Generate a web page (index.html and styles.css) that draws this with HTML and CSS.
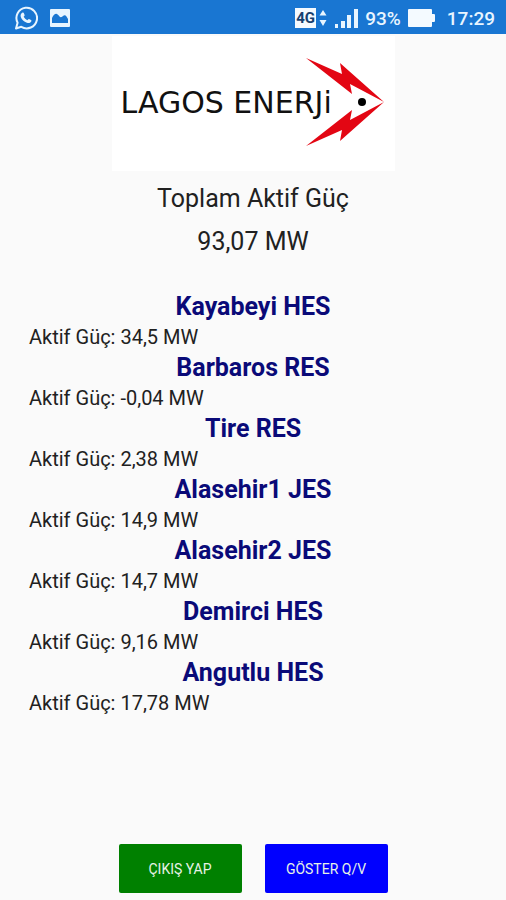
FILE: index.html
```html
<!DOCTYPE html>
<html lang="tr">
<head>
    <meta charset="UTF-8">
    <meta name="viewport" content="width=device-width, initial-scale=1.0">
    <title>Lagos Enerji</title>
    <link rel="stylesheet" href="styles.css">
</head>
<body>
    <header class="status-bar">
        <div class="status-group">
            <svg class="whatsapp" width="24" height="24" viewBox="0 0 24 24" aria-hidden="true">
                <path d="M2 22.5 L3.6 16.8 A10.3 10.3 0 1 1 7.3 20.8 Z" fill="none" stroke="#e8f5ff" stroke-width="2" stroke-linejoin="round"/>
                <path d="M8.6 6.6 C9.2 6.3 9.6 6.6 9.9 7.3 L10.6 9 C10.8 9.6 10 10.2 9.7 10.7 C10.5 12.3 11.7 13.4 13.4 14.2 C14 13.8 14.4 12.9 15 13.1 L17 14 C17.6 14.3 17.5 15 17.1 15.7 C16.3 17 14.6 17.4 12.9 16.8 C9.9 15.8 7.8 13.7 6.8 11 C6.2 9.3 7 7.3 8.6 6.6 Z" fill="#e8f5ff"/>
            </svg>
            <svg class="picture" width="20" height="18" viewBox="0 0 20 18" aria-hidden="true">
                <rect width="20" height="18" rx="1" fill="#e8f5ff"/>
                <path d="M2 14 V9 Q4.5 4 7 5 Q8.5 6 10 8 Q12 8.5 13 7 Q15 5.5 16.5 7.5 L18 10 V14 Z" fill="#1976d2"/>
            </svg>
        </div>
        <div class="status-group status-right">
            <span class="network">4G</span>
            <svg class="arrows" width="8" height="18" viewBox="0 0 8 18" aria-hidden="true">
                <path d="M4 1 L7.5 6.5 H0.5 Z M4 17 L7.5 11 H0.5 Z" fill="#e8f5ff"/>
            </svg>
            <svg class="signal" width="24" height="20" viewBox="0 0 24 20" aria-hidden="true">
                <path d="M1 16 H4 V20 H1 Z M7 13 H11 V20 H7 Z M13 7 H17 V20 H13 Z M20 1 H24 V20 H20 Z" fill="#e8f5ff"/>
            </svg>
            <span class="percent">93%</span>
            <svg class="battery" width="27" height="18" viewBox="0 0 27 18" aria-hidden="true">
                <path d="M1 0 H23 Q24 0 24 1 V5 H26 Q27 5 27 6 V12 Q27 13 26 13 H24 V17 Q24 18 23 18 H1 Q0 18 0 17 V1 Q0 0 1 0 Z" fill="#f4faff"/>
            </svg>
            <span class="clock">17:29</span>
        </div>
    </header>

    <main>
        <div class="logo">
            <span class="logo-text">LAGOS ENERJi</span>
            <svg class="logo-mark" width="78" height="90" viewBox="0 0 78 90" aria-hidden="true">
                <path d="M0 0 L36 16 L34 5 L78 44 L44 26 L46 36 Z" fill="#e30613"/>
                <path d="M0 88 L36 72 L34 83 L78 44 L44 62 L46 52 Z" fill="#e30613"/>
                <circle cx="56" cy="44" r="4" fill="#000"/>
            </svg>
        </div>

        <h1>Toplam Aktif Güç</h1>
        <p class="total">93,07 MW</p>

        <section class="plants">
            <h2>Kayabeyi HES</h2>
            <p>Aktif Güç: 34,5 MW</p>
            <h2>Barbaros RES</h2>
            <p>Aktif Güç: -0,04 MW</p>
            <h2>Tire RES</h2>
            <p>Aktif Güç: 2,38 MW</p>
            <h2>Alasehir1 JES</h2>
            <p>Aktif Güç: 14,9 MW</p>
            <h2>Alasehir2 JES</h2>
            <p>Aktif Güç: 14,7 MW</p>
            <h2>Demirci HES</h2>
            <p>Aktif Güç: 9,16 MW</p>
            <h2>Angutlu HES</h2>
            <p>Aktif Güç: 17,78 MW</p>
        </section>
    </main>

    <footer class="actions">
        <button type="button" class="logout-button">ÇIKIŞ YAP</button>
        <button type="button" class="show-button">GÖSTER Q/V</button>
    </footer>
</body>
</html>
```

FILE: styles.css
```css
* {
    box-sizing: border-box;
}
body {
    font-family: Roboto, sans-serif;
    background-color: #fafafa;
    color: #212121;
    margin: 0;
    min-height: 100vh;
    display: flex;
    flex-direction: column;
}
.status-bar {
    display: flex;
    justify-content: space-between;
    align-items: center;
    height: 34px;
    padding: 2px 11px 0 14px;
    background-color: #1976d2;
    color: #e8f5ff;
}
.status-group {
    display: flex;
    align-items: center;
    gap: 12px;
}
.status-right {
    gap: 7px;
    font-size: 19px;
    font-weight: 500;
}
.network {
    width: 21px;
    height: 20px;
    margin-right: -4px;
    background-color: #f4faff;
    color: #17406e;
    font-size: 15px;
    font-weight: 700;
    line-height: 20px;
    text-align: center;
}
.clock {
    margin-left: 5px;
}
main {
    flex: 1;
}
/* wordmark and fish share one cell, the fish's tail runs over the last letters */
.logo {
    display: grid;
    align-items: center;
    width: 283px;
    height: 135px;
    margin: 2px auto 0;
    padding: 0 11px 2px 9px;
    background-color: #fff;
}
.logo-text,
.logo-mark {
    grid-area: 1 / 1;
}
.logo-text {
    color: #111;
    font-family: "DejaVu Sans", sans-serif;
    font-size: 30px;
    white-space: nowrap;
}
.logo-mark {
    justify-self: end;
}
h1,
.total {
    margin: 0;
    font-size: 25px;
    font-weight: 400;
    line-height: 43px;
    text-align: center;
}
h1 {
    margin-top: 6px;
}
.plants {
    margin-top: 27px;
    padding: 0 29px;
}
.plants h2 {
    margin: 0;
    color: #0a0a78;
    font-size: 25px;
    font-weight: 700;
    line-height: 34px;
    text-align: center;
}
.plants p {
    margin: 0;
    font-size: 20px;
    line-height: 27px;
}
.actions {
    display: flex;
    justify-content: center;
    gap: 23px;
    padding-bottom: 7px;
}
.actions button {
    width: 123px;
    height: 49px;
    padding: 0;
    border: none;
    border-radius: 2px;
    color: #e6f2e6;
    font-family: inherit;
    font-size: 14px;
    font-weight: 400;
    cursor: pointer;
}
.actions .logout-button {
    background-color: #008000;
}
.actions .show-button {
    background-color: #0000ff;
}
```
